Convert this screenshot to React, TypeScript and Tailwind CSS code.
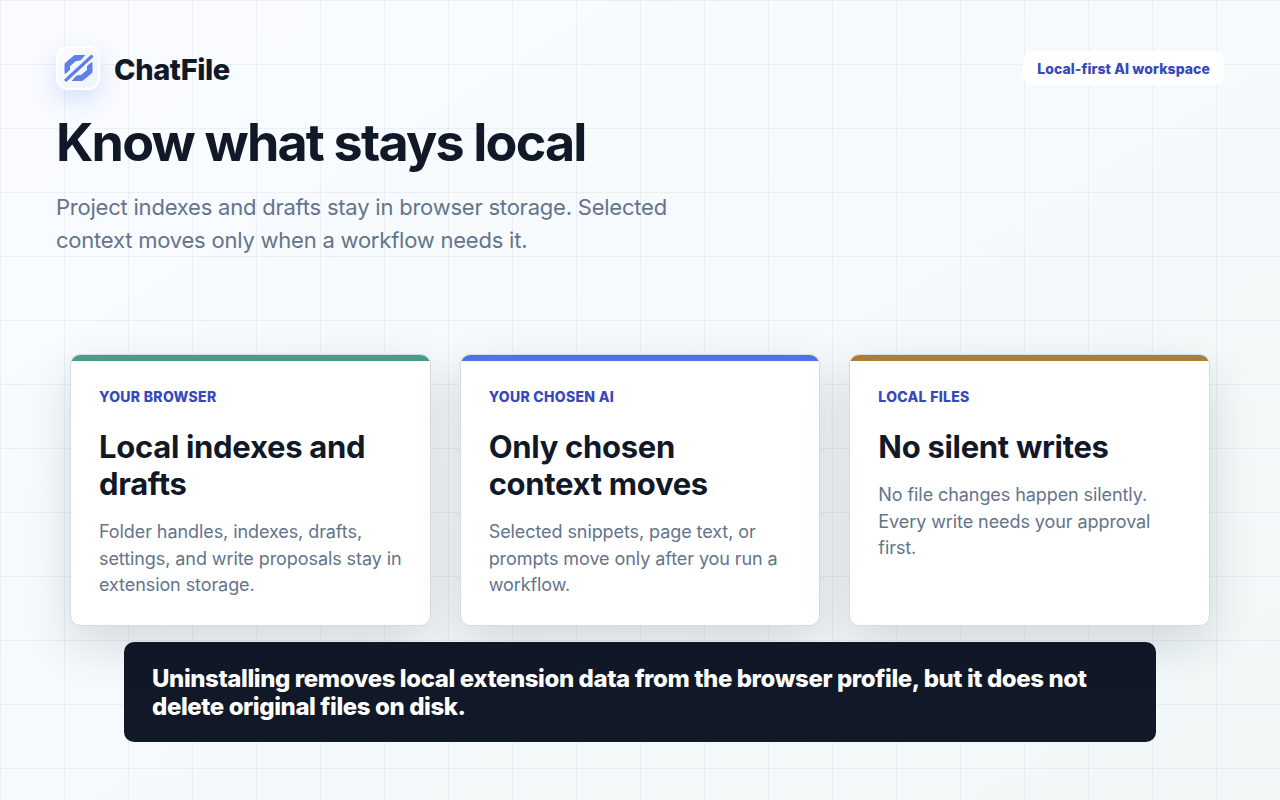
const cards = [
  {
    accent: "bg-[#4a9b8a]",
    label: "YOUR BROWSER",
    title: "Local indexes and drafts",
    body: "Folder handles, indexes, drafts, settings, and write proposals stay in extension storage.",
  },
  {
    accent: "bg-[#5271e8]",
    label: "YOUR CHOSEN AI",
    title: "Only chosen context moves",
    body: "Selected snippets, page text, or prompts move only after you run a workflow.",
  },
  {
    accent: "bg-[#ad7b3a]",
    label: "LOCAL FILES",
    title: "No silent writes",
    body: "No file changes happen silently. Every write needs your approval first.",
  },
];

function Logo() {
  return (
    <div className="w-11 h-11 rounded-xl border-2 border-white bg-gradient-to-br from-[#fbfcff] to-[#eef3fd] shadow-[0_10px_24px_rgba(82,113,232,0.2)]">
      <svg width="40" height="40" viewBox="2 2 40 40" fill="#5f80e6" stroke="#5f80e6" strokeLinejoin="round">
        <path d="M9 27.5 9 17.5 18.5 9.5 28.5 9.5 24.5 14 20 14.5 13.5 20 13.5 24Z" strokeWidth="1" />
        <path d="M36 16.5 36 26.5 26.5 34.5 16.5 34.5 20.5 30 25 29.5 31.5 24 31.5 20Z" strokeWidth="1" />
        <path d="M10 34 35.5 10.5" strokeWidth="3.2" strokeLinecap="round" />
      </svg>
    </div>
  );
}

export default function App() {
  return (
    <div
      className="relative w-[1280px] h-[800px] overflow-hidden font-['Inter',sans-serif] bg-[#f7fafc] bg-[linear-gradient(rgba(148,163,184,0.13)_1px,transparent_1px),linear-gradient(90deg,rgba(148,163,184,0.13)_1px,transparent_1px),linear-gradient(to_bottom_right,#f9fbff_0%,#f8fbff_20%,#f1f7f6_100%)] bg-[length:64px_64px,64px_64px,100%_100%]"
    >
      <div className="px-14 pt-[46px]">
        <div className="flex items-center justify-between">
          <div className="flex items-center gap-3.5">
            <Logo />
            <span className="text-[29px] leading-none font-extrabold tracking-[-0.4px] text-[#111827] translate-y-px">ChatFile</span>
          </div>
          <div className="h-[34px] pt-0.5 px-3.5 rounded-[10px] bg-white flex items-center text-sm font-extrabold tracking-[0.08px] text-[#3748bd]">
            Local-first AI workspace
          </div>
        </div>
        <h1 className="mt-[23px] text-[52px] leading-[60px] font-bold tracking-[-1.8px] text-[#111827]">Know what stays local</h1>
        <p className="mt-[18px] w-[660px] text-[22px] leading-[33px] tracking-[-0.22px] text-[#64748b]">
          Project indexes and drafts stay in browser storage. Selected context moves only when a workflow needs it.
        </p>
      </div>

      <div className="mt-[97px] mx-[70px] grid grid-cols-3 gap-[29px]">
        {cards.map((card) => (
          <div
            key={card.label}
            className="relative h-[272px] rounded-[10px] overflow-hidden bg-white border border-[#d5dbe3] shadow-[0_18px_48px_rgba(15,23,42,0.14)] px-7 pt-[34px]"
          >
            <div className={`absolute top-0 left-0 right-0 h-1.5 ${card.accent}`} />
            <div className="text-sm leading-4 font-extrabold tracking-[0.3px] text-[#3748bd]">{card.label}</div>
            <h2 className="mt-[23px] text-[31px] leading-[37px] font-bold tracking-[-0.3px] text-[#111827]">{card.title}</h2>
            <p className="mt-[17px] text-lg leading-[26.5px] tracking-[-0.08px] text-[#64748b]">{card.body}</p>
          </div>
        ))}
      </div>

      <div className="mt-4 mx-[124px] h-[100px] pt-0.5 rounded-[10px] bg-[#111827] px-7 flex items-center">
        <p className="text-2xl leading-7 font-extrabold tracking-[-0.41px] text-white">
          Uninstalling removes local extension data from the browser profile, but it does not delete original files on disk.
        </p>
      </div>
    </div>
  );
}
